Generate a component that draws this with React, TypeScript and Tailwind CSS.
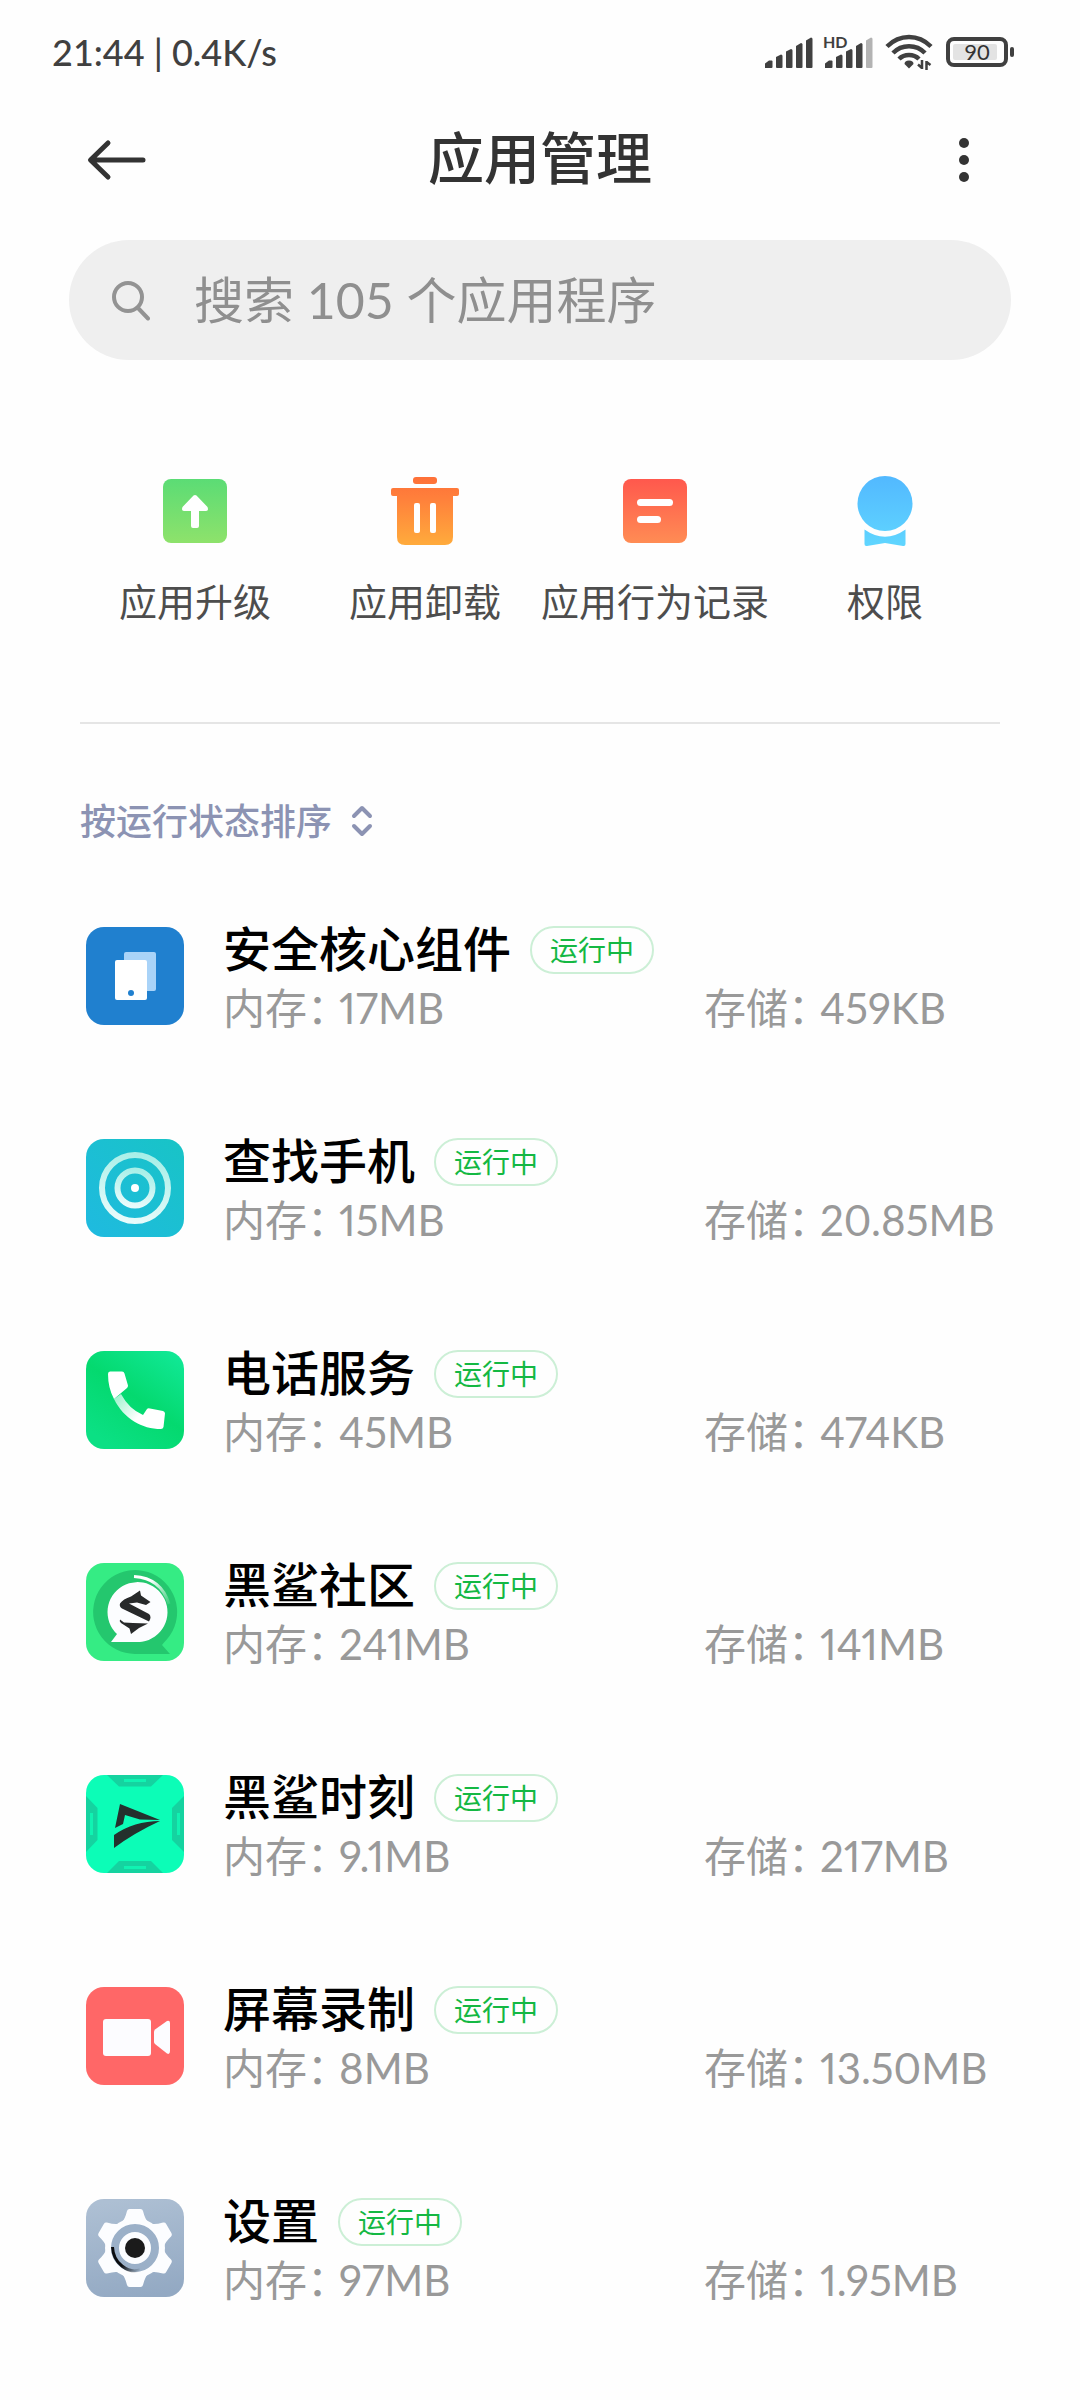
import { useState } from "react";
import type { ReactNode } from "react";

type AppInfo = {
  name: string;
  memory: string;
  storage: string;
  icon: ReactNode;
};

const SORT_OPTIONS = ["按运行状态排序", "按应用名称排序", "按占用空间排序"];

function SignalIcon({ weak = false }: { weak?: boolean }) {
  return (
    <svg width="50" height="46" viewBox="0 -6 50 46" fill="#404040" aria-hidden="true">
      {weak && (
        <text x="0" y="13" fontSize="16" fontWeight="700" fontFamily="Lato, sans-serif">
          HD
        </text>
      )}
      <path d="M2 33V28.500L6 25.500H8.500Q9.500 25.500 9.500 26.500V32Q9.500 33 8.500 33H3Z" />
      <path d="M13 22L18 19.500Q19.500 19.500 19.500 21V32Q19.500 33 18.500 33H14Q13 33 13 32Z" />
      <path d="M23 16.500L28 14Q29.500 14 29.500 15.500V32Q29.500 33 28.500 33H24Q23 33 23 32Z" />
      <path d="M33 11L38 8Q39.500 8 39.500 9.500V32Q39.500 33 38.500 33H34Q33 33 33 32Z" />
      <path
        d="M43 5.500L48 2.500Q49.500 2.500 49.500 4V32Q49.500 33 48.500 33H44Q43 33 43 32Z"
        fill={weak ? "#b3b3b3" : "#404040"}
      />
    </svg>
  );
}

function WifiIcon() {
  return (
    <svg width="48" height="36" viewBox="0 0 48 36" fill="none" stroke="#404040" strokeWidth="4.500" aria-hidden="true">
      <path d="M2 12.500Q11.500 3 24 3T46 12.500" />
      <path d="M8 19Q14.500 12.200 24 12.200T40 19" />
      <path d="M14 25Q18 21 24 21T34 25" />
      <path d="M24 26.500C27 26.500 28.500 28 28.500 30L24 34.500L19.500 30C19.500 28 21 26.500 24 26.500Z" fill="#404040" stroke="none" />
      <path d="M37 26V35M41.500 36V27M37 34L33 30.500M41.500 28L45.500 31" strokeWidth="2.500" />
    </svg>
  );
}

function BatteryIcon() {
  return (
    <svg width="70" height="32" viewBox="0 0 70 32" aria-label="电量 90">
      <rect x="3" y="3" width="58" height="26" rx="6" fill="none" stroke="#404040" strokeWidth="4" />
      <rect x="8" y="8" width="44" height="16" rx="2" fill="#e3e3e3" />
      <rect x="65" y="11" width="4" height="10" rx="2" fill="#404040" />
      <text x="32" y="24" fontSize="22" textAnchor="middle" fill="#333333" fontFamily="Lato, sans-serif">
        90
      </text>
    </svg>
  );
}

function UpgradeIcon() {
  return (
    <svg width="72" height="72" viewBox="0 0 72 72" aria-hidden="true">
      <defs>
        <linearGradient id="upgrade" x1="0" y1="0" x2="0" y2="1">
          <stop offset="0" stopColor="#5bdc75" />
          <stop offset="1" stopColor="#8ee26b" />
        </linearGradient>
      </defs>
      <rect x="4" y="4" width="64" height="64" rx="8" fill="url(#upgrade)" />
      <path
        d="M34.500 20.500Q36 19.500 37.500 20.500L48.500 32Q50 36 47 36H40V51Q40 53 38 53H34Q32 53 32 51V36H25Q22 36 23.500 32Z"
        fill="#fff"
      />
    </svg>
  );
}

function UninstallIcon() {
  return (
    <svg width="72" height="72" viewBox="0 0 72 72" aria-hidden="true">
      <defs>
        <linearGradient id="uninstall" x1="0" y1="2" x2="0" y2="70" gradientUnits="userSpaceOnUse">
          <stop offset="0" stopColor="#fe7038" />
          <stop offset="0.300" stopColor="#ff7f3b" />
          <stop offset="1" stopColor="#ffab3c" />
        </linearGradient>
      </defs>
      <g fill="url(#uninstall)">
        <rect x="24" y="2" width="24" height="7" rx="3" />
        <path d="M4 13H68Q70 13 70 15V19Q70 21 68 21H64V62Q64 70 56 70H16Q8 70 8 62V21H4Q2 21 2 19V15Q2 13 4 13Z" />
      </g>
      <rect x="25" y="28" width="6" height="30" rx="2" fill="#fff" />
      <rect x="41" y="28" width="6" height="30" rx="2" fill="#fff" />
    </svg>
  );
}

function RecordIcon() {
  return (
    <svg width="72" height="72" viewBox="0 0 72 72" aria-hidden="true">
      <defs>
        <linearGradient id="record" x1="0" y1="0" x2="0" y2="1">
          <stop offset="0" stopColor="#ff584d" />
          <stop offset="1" stopColor="#ff8c54" />
        </linearGradient>
      </defs>
      <rect x="4" y="4" width="64" height="64" rx="8" fill="url(#record)" />
      <rect x="18" y="24" width="36" height="7" rx="3.500" fill="#fff" />
      <rect x="18" y="41" width="24" height="7" rx="3.500" fill="#fff" />
    </svg>
  );
}

function PermissionIcon() {
  return (
    <svg width="72" height="72" viewBox="0 0 72 72" aria-hidden="true">
      <defs>
        <linearGradient id="permission" x1="0" y1="0" x2="0" y2="72" gradientUnits="userSpaceOnUse">
          <stop offset="0" stopColor="#52b8ff" />
          <stop offset="1" stopColor="#60d6ff" />
        </linearGradient>
      </defs>
      <g fill="url(#permission)">
        <circle cx="36" cy="28.500" r="27.500" />
        <path d="M15.500 54.500Q36 69 56.500 54.500V69Q56.500 71.500 54 71L36 68L18 71Q15.500 71.500 15.500 69Z" />
      </g>
    </svg>
  );
}

function CoreIcon() {
  return (
    <svg viewBox="0 0 98 98" className="size-full">
      <rect width="98" height="98" fill="#2080cf" />
      <rect x="38" y="25" width="32" height="39" rx="2" fill="#a9d3f8" />
      <rect x="29" y="33" width="32" height="40" rx="2" fill="#fff" />
      <circle cx="45" cy="66" r="3" fill="#2080cf" />
    </svg>
  );
}

function FindIcon() {
  return (
    <svg viewBox="0 0 98 98" className="size-full">
      <defs>
        <linearGradient id="find" x1="1" y1="0" x2="0" y2="1">
          <stop offset="0" stopColor="#18c4c6" />
          <stop offset="1" stopColor="#1fbae0" />
        </linearGradient>
        <linearGradient id="ring" x1="0.600" y1="0" x2="0.400" y2="1">
          <stop offset="0" stopColor="#a8efe8" />
          <stop offset="1" stopColor="#e8fbfb" />
        </linearGradient>
      </defs>
      <rect width="98" height="98" fill="url(#find)" />
      <circle cx="49" cy="49" r="33" fill="none" stroke="url(#ring)" strokeWidth="6" />
      <circle cx="49" cy="49" r="17.500" fill="none" stroke="url(#ring)" strokeWidth="6" />
      <circle cx="49" cy="49" r="4" fill="#fff" />
    </svg>
  );
}

function PhoneIcon() {
  return (
    <svg viewBox="0 0 98 98" className="size-full">
      <defs>
        <linearGradient id="phone" x1="1" y1="0" x2="0.300" y2="1">
          <stop offset="0" stopColor="#12ea9a" />
          <stop offset="0.550" stopColor="#04d96f" />
          <stop offset="1" stopColor="#0be084" />
        </linearGradient>
        <linearGradient id="handset" x1="28" y1="46" x2="52" y2="66" gradientUnits="userSpaceOnUse">
          <stop offset="0" stopColor="#9df2cd" />
          <stop offset="1" stopColor="#fff" />
        </linearGradient>
      </defs>
      <rect width="98" height="98" fill="url(#phone)" />
      <path
        d="M28 48L35 43Q43 58 57 64L61 58Q62 57 64 57.500L77 60Q79 60.500 79 62.500L77.500 76Q77 78 75 78C56 78 38 68 28 48Z"
        fill="url(#handset)"
      />
      <path d="M24 20.500H36Q38 20.500 38.500 22.500L42 34.500Q42 36 41 37L28 48Q22 37 22 23Q22 20.500 24 20.500Z" fill="#fff" />
    </svg>
  );
}

function CommunityIcon() {
  return (
    <svg viewBox="0 0 98 98" className="size-full">
      <defs>
        <linearGradient id="glint" x1="0" y1="0" x2="1" y2="1">
          <stop offset="0.300" stopColor="#fff" />
          <stop offset="1" stopColor="#fff" stopOpacity="0.100" />
        </linearGradient>
      </defs>
      <rect width="98" height="98" fill="#35ec84" />
      <path d="M49 91A42 42 0 1 1 78 79.500L76 82L84 91Z" fill="#24c76e" />
      <path d="M49 79H25L31 71A30 30 0 1 1 49 79Z" fill="#fcfdff" />
      <path d="M48 13.500Q75 15 83 41" fill="none" stroke="url(#glint)" strokeWidth="3" />
      <g fill="#27292a">
        <path d="M54 27.500L55 32.500L64.500 39L60 42L51 39.500L43 40.500L63 51Q66 54 63 58.500L36 45.500Q33 43.500 34 40.500Q37 36 45 33.500Z" />
        <path d="M34 56.500L38 59.500L47 60L62 60.500L53 65L45 71L43.500 65.500L35 60Q33 58 34 56.500Z" />
      </g>
    </svg>
  );
}

function MomentIcon() {
  return (
    <svg viewBox="0 0 98 98" className="size-full">
      <rect width="98" height="98" fill="#0cfdb7" />
      <g fill="#15d3a0">
        <path d="M21 0H77L65 11.500H33Z" />
        <path d="M21 98H77L65 86H33Z" />
        <path d="M0 21L11.500 33V65L0 77Z" />
        <path d="M98 21L86 33V65L98 77Z" />
      </g>
      <g fill="#10f3b2">
        <rect x="38" y="4" width="22" height="3" />
        <rect x="38" y="91" width="22" height="3" />
        <rect x="4" y="38" width="3" height="22" />
        <rect x="91" y="38" width="3" height="22" />
      </g>
      <g fill="#24302d">
        <path d="M34 29L74 45L54 44.500L39 40L37 49L29 53Z" />
        <path d="M74 46Q48 58 28 73V60Q48 46 74 46Z" />
      </g>
    </svg>
  );
}

function ScreenRecordIcon() {
  return (
    <svg viewBox="0 0 98 98" className="size-full">
      <rect width="98" height="98" fill="#ff6767" />
      <rect x="17" y="32" width="48" height="37" rx="3" fill="#fcfcff" />
      <path d="M68 45Q68 43.500 69 42.500L81 34Q84 33 84 36V64Q84 68 81 66.500L69 57Q68 56 68 55Z" fill="#fcfcff" />
    </svg>
  );
}

function SettingsIcon() {
  return (
    <svg viewBox="0 0 98 98" className="size-full">
      <defs>
        <linearGradient id="settings" x1="0.400" y1="0" x2="0.600" y2="1">
          <stop offset="0" stopColor="#adbfd3" />
          <stop offset="1" stopColor="#93a9c3" />
        </linearGradient>
        <linearGradient id="shade" x1="26" y1="50" x2="54" y2="72" gradientUnits="userSpaceOnUse">
          <stop offset="0.500" stopColor="#0b0d10" />
          <stop offset="1" stopColor="#0b0d10" stopOpacity="0" />
        </linearGradient>
      </defs>
      <rect width="98" height="98" fill="url(#settings)" />
      <g fill="#fcfdff">
        <circle cx="49" cy="49" r="30" />
        {[0, 60, 120, 180, 240, 300].map((angle) => (
          <path key={angle} d="M36 23Q39 20 41 12Q41.500 10 43.500 10H54.500Q56.500 10 57 12Q59 20 62 23Z" transform={`rotate(${angle} 49 49)`} />
        ))}
      </g>
      <circle cx="49" cy="49" r="20" fill="none" stroke="#9bb0c8" strokeWidth="8" />
      <path d="M26.500 48Q27 60 36 67T54 71" fill="none" stroke="url(#shade)" strokeWidth="3" />
      <circle cx="49" cy="49" r="10" fill="#1b1b1b" />
    </svg>
  );
}

const SHORTCUTS = [
  { label: "应用升级", icon: <UpgradeIcon /> },
  { label: "应用卸载", icon: <UninstallIcon /> },
  { label: "应用行为记录", icon: <RecordIcon /> },
  { label: "权限", icon: <PermissionIcon /> },
];

const APPS: AppInfo[] = [
  { name: "安全核心组件", memory: "17MB", storage: "459KB", icon: <CoreIcon /> },
  { name: "查找手机", memory: "15MB", storage: "20.85MB", icon: <FindIcon /> },
  { name: "电话服务", memory: "45MB", storage: "474KB", icon: <PhoneIcon /> },
  { name: "黑鲨社区", memory: "241MB", storage: "141MB", icon: <CommunityIcon /> },
  { name: "黑鲨时刻", memory: "9.1MB", storage: "217MB", icon: <MomentIcon /> },
  { name: "屏幕录制", memory: "8MB", storage: "13.50MB", icon: <ScreenRecordIcon /> },
  { name: "设置", memory: "97MB", storage: "1.95MB", icon: <SettingsIcon /> },
];

function Usage({ label, value }: { label: string; value: string }) {
  return (
    <div className="flex gap-[11px] whitespace-nowrap">
      {/* half-width colon, otherwise it leaves a whole blank cell before the value */}
      <span className="[font-feature-settings:'halt']">{label}：</span>
      <span className="proportional-nums">{value}</span>
    </div>
  );
}

function AppRow({ app }: { app: AppInfo }) {
  return (
    <li className="flex items-start gap-[39px]">
      <div className="mt-px size-[98px] shrink-0 overflow-hidden rounded-[18px]">{app.icon}</div>
      <div className="min-w-0 flex-1">
        <div className="flex items-center gap-[19px]">
          <h2 className="pb-0.5 text-[48px] leading-[46px] font-medium text-black">{app.name}</h2>
          <span className="flex h-12 items-center rounded-full border-2 border-[#ccefd6] px-[18px] text-[28px] leading-[28px] text-[#14b843]">
            运行中
          </span>
        </div>
        <div className="mt-[10px] flex text-[42px] leading-[48px] text-[#999999]">
          <div className="flex-1">
            <Usage label="内存" value={app.memory} />
          </div>
          <div className="w-[296px]">
            <Usage label="存储" value={app.storage} />
          </div>
        </div>
      </div>
    </li>
  );
}

export default function App() {
  const [query, setQuery] = useState("");
  const [sort, setSort] = useState(SORT_OPTIONS[0]);

  const apps = APPS.filter((app) => app.name.includes(query.trim()));

  return (
    <div className="min-h-screen bg-[#fefefe] font-['Lato','Noto_Sans_CJK_SC',sans-serif]">
      <div className="flex h-[104px] items-center justify-between pr-[65px] pl-[52px] text-[#404040]">
        <span className="text-[36px] leading-[40px] font-medium">21:44 | 0.4K/s</span>
        <div className="flex items-center">
          <SignalIcon />
          <span className="ml-[10px]">
            <SignalIcon weak />
          </span>
          <span className="ml-3">
            <WifiIcon />
          </span>
          <span className="ml-3">
            <BatteryIcon />
          </span>
        </div>
      </div>

      <header className="flex h-28 items-center justify-between px-[84px]">
        <button type="button" aria-label="返回" className="flex size-16 items-center justify-center">
          <svg width="60" height="44" viewBox="0 0 60 44" fill="none" stroke="#333333" strokeWidth="5" strokeLinecap="round" strokeLinejoin="round">
            <path d="M22 5L4.500 22L22 39M5 22H57" />
          </svg>
        </button>
        <h1 className="pb-1 text-[56px] leading-[64px] font-medium text-[#333333]">应用管理</h1>
        <button type="button" aria-label="更多" className="flex size-16 items-center justify-center">
          <svg width="12" height="46" viewBox="0 0 12 46" fill="#333333">
            <circle cx="6" cy="6" r="5" />
            <circle cx="6" cy="23" r="5" />
            <circle cx="6" cy="40" r="5" />
          </svg>
        </button>
      </header>

      <main>
        <label className="mx-[69px] mt-6 flex h-[120px] items-center gap-11 rounded-full bg-[#efefef] px-[41px]">
          <svg width="40" height="42" viewBox="0 0 40 42" fill="none" stroke="#939393" strokeWidth="4" strokeLinecap="round" aria-hidden="true">
            <circle cx="18" cy="18" r="14" />
            <path d="M28 29L38 39.500" />
          </svg>
          <input
            type="text"
            aria-label="搜索应用程序"
            value={query}
            onChange={(e) => setQuery(e.target.value)}
            placeholder="搜索 105 个应用程序"
            className="min-w-0 flex-1 bg-transparent text-[50px] leading-[64px] text-[#333333] outline-none placeholder:text-[#8f8f8f]"
          />
        </label>

        <nav className="mt-[115px] grid grid-cols-4 px-20">
          {SHORTCUTS.map((item) => (
            <button key={item.label} type="button" className="flex flex-col items-center gap-[30px]">
              {item.icon}
              <span className="text-[38px] leading-[48px] whitespace-nowrap text-[#4d4d4d]">{item.label}</span>
            </button>
          ))}
        </nav>

        <hr className="mx-20 mt-[97px] border-t-2 border-[#e5e5e5]" />

        <label className="mx-20 mt-[73px] flex h-12 items-center gap-[18px] text-[#8c93b3]">
          <select
            aria-label="排序方式"
            value={sort}
            onChange={(e) => setSort(e.target.value)}
            className="appearance-none bg-transparent text-[36px] leading-[48px] font-medium outline-none"
          >
            {SORT_OPTIONS.map((option) => (
              <option key={option}>{option}</option>
            ))}
          </select>
          <svg width="22" height="32" viewBox="0 0 22 32" fill="none" stroke="currentColor" strokeWidth="4" strokeLinecap="round" strokeLinejoin="round" aria-hidden="true">
            <path d="M3 11L11 3L19 11M3 21L11 29L19 21" />
          </svg>
        </label>

        <ul className="mt-[81px] flex flex-col gap-[106px] pr-20 pb-12 pl-[86px]">
          {apps.map((app) => (
            <AppRow key={app.name} app={app} />
          ))}
        </ul>
      </main>
    </div>
  );
}
